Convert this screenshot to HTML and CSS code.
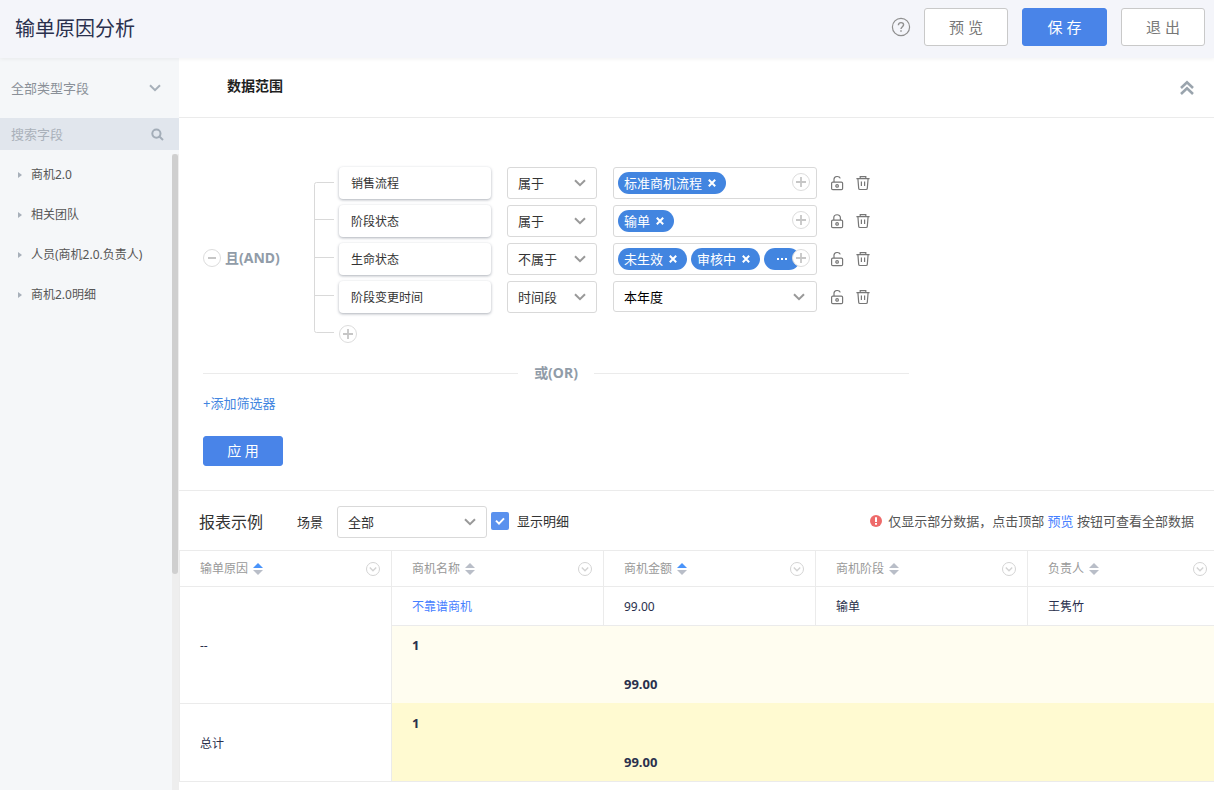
FILE: index.html
```html
<!DOCTYPE html>
<html lang="zh-CN">
<head>
<meta charset="utf-8">
<title>输单原因分析</title>
<link rel="stylesheet" href="styles.css">
</head>
<body>
<svg class="sprite" aria-hidden="true">
  <symbol id="chevron" viewBox="0 0 12 8"><path d="M1 1.2 6 6.2 11 1.2" fill="none" stroke="currentColor" stroke-width="2"/></symbol>
  <symbol id="plus" viewBox="0 0 18 18"><circle cx="9" cy="9" r="8.5" fill="#fff" stroke="#dcdcdc"/><path d="M4 9H14M9 4V14" stroke="#c6c6c6" stroke-width="1.8"/></symbol>
  <symbol id="minus" viewBox="0 0 18 18"><circle cx="9" cy="9" r="8.5" fill="#fff" stroke="#dcdcdc"/><path d="M5 9H13" stroke="#c0c0c0" stroke-width="1.8"/></symbol>
  <symbol id="unlock" viewBox="0 0 14 16"><g fill="none" stroke="#777" stroke-width="1.2"><rect x="1.6" y="7.1" width="11" height="7.6" rx="1.2"/><path d="M4 7V4.2C4 .9 9.4.6 10.3 3.4"/><circle cx="7.1" cy="10.9" r="1.3"/></g></symbol>
  <symbol id="lock" viewBox="0 0 14 16"><g fill="none" stroke="#777" stroke-width="1.2"><rect x="1.6" y="7.1" width="11" height="7.6" rx="1.2"/><path d="M3.8 7V4.8C3.8.7 10.4.7 10.4 4.8V7"/><circle cx="7.1" cy="10.9" r="1.3"/></g></symbol>
  <symbol id="trash" viewBox="0 0 14 16"><g fill="none" stroke="#777" stroke-width="1.2"><path d="M.4 3.6H13.6M4.2 3.4V1.6H9.8V3.4M1.9 3.8 2.7 13.4Q2.8 14.5 3.9 14.5H10.1Q11.2 14.5 11.3 13.4L12.1 3.8M5.4 6.6V11M8.6 6.6V11"/></g></symbol>
  <symbol id="cross" viewBox="0 0 8 8"><path d="M.8.8 7.2 7.2M7.2.8.8 7.2" stroke="#fff" stroke-width="2"/></symbol>
  <symbol id="sort" viewBox="0 0 10 12"><path d="M5 0 10 5H0Z" fill="currentColor"/><path d="M5 12 0 7H10Z" fill="#b9bec8"/></symbol>
  <symbol id="more" viewBox="0 0 14 14"><g fill="none" stroke="#d3d3d3"><circle cx="7" cy="7" r="6.5"/><path d="M3.8 5.6 7 8.8 10.2 5.6" stroke-width="1.4"/></g></symbol>
</svg>

<header class="topbar">
  <h1 class="topbar-title">输单原因分析</h1>
  <button class="icon-btn" aria-label="帮助"><svg width="20" height="20" viewBox="0 0 20 20"><g fill="none" stroke="#8f8f8f"><circle cx="10" cy="10" r="8.6" stroke-width="1.2"/><path d="M7.4 8.2C7.4 4.8 12.6 4.8 12.6 7.8 12.6 9.6 10 9.8 10 12" stroke-width="1.4"/><path d="M10 13.2V14.8" stroke-width="1.5"/></g></svg></button>
  <div class="topbar-actions">
    <button class="btn">预 览</button>
    <button class="btn btn-primary">保 存</button>
    <button class="btn">退 出</button>
  </div>
</header>

<div class="layout">
  <aside class="sidebar">
    <label class="select type-select">
      <select aria-label="字段类型"><option>全部类型字段</option></select>
      <svg class="chevron" width="12" height="8"><use href="#chevron"/></svg>
    </label>
    <label class="search">
      <input type="text" placeholder="搜索字段" aria-label="搜索字段">
      <svg width="13" height="13" viewBox="0 0 13 13"><g fill="none" stroke="#a3adb8" stroke-width="2"><circle cx="5.4" cy="5.6" r="4.1"/><path d="M8.4 8.6 12 12"/></g></svg>
    </label>
    <div class="tree-pane">
      <ul class="tree">
        <li><button class="tree-item">商机2.0</button></li>
        <li><button class="tree-item">相关团队</button></li>
        <li><button class="tree-item">人员(商机2.0.负责人)</button></li>
        <li><button class="tree-item">商机2.0明细</button></li>
      </ul>
      <div class="scroll-track"><div class="scroll-thumb"></div></div>
    </div>
  </aside>

  <main class="main">
    <div class="section-head">
      <h2 class="section-title">数据范围</h2>
      <button class="icon-btn" aria-label="收起"><svg width="14" height="16" viewBox="0 0 14 16"><path d="M1 8 7 2.4 13 8M1 14 7 8.4 13 14" fill="none" stroke="#9aa4ad" stroke-width="2.6"/></svg></button>
    </div>

    <section class="filters">
      <div class="group">
        <div class="operator">
          <button class="icon-btn" aria-label="删除条件组"><svg width="18" height="18"><use href="#minus"/></svg></button>
          <span>且(AND)</span>
        </div>
        <svg class="branch" width="20" height="151" viewBox="0 0 20 151"><path d="M20 .5H2.5Q.5.5.5 2.5V148.5Q.5 150.5 2.5 150.5H20M1 37.5H20M1 75.5H20M1 113.5H20" fill="none" stroke="#d9d9d9"/></svg>
        <div class="rules">
          <div class="rule">
            <div class="field">销售流程</div>
            <label class="select compare"><select aria-label="销售流程 运算符"><option>属于</option></select><svg class="chevron" width="12" height="8"><use href="#chevron"/></svg></label>
            <div class="value">
              <div class="tags"><span class="tag">标准商机流程<button class="tag-x" aria-label="移除"><svg width="8" height="8"><use href="#cross"/></svg></button></span></div>
              <button class="icon-btn add" aria-label="添加值"><svg width="18" height="18"><use href="#plus"/></svg></button>
            </div>
            <div class="tools"><button class="icon-btn" aria-label="未锁定"><svg width="14" height="16"><use href="#unlock"/></svg></button><button class="icon-btn" aria-label="删除"><svg width="14" height="16"><use href="#trash"/></svg></button></div>
          </div>
          <div class="rule">
            <div class="field">阶段状态</div>
            <label class="select compare"><select aria-label="阶段状态 运算符"><option>属于</option></select><svg class="chevron" width="12" height="8"><use href="#chevron"/></svg></label>
            <div class="value">
              <div class="tags"><span class="tag">输单<button class="tag-x" aria-label="移除"><svg width="8" height="8"><use href="#cross"/></svg></button></span></div>
              <button class="icon-btn add" aria-label="添加值"><svg width="18" height="18"><use href="#plus"/></svg></button>
            </div>
            <div class="tools"><button class="icon-btn" aria-label="已锁定"><svg width="14" height="16"><use href="#lock"/></svg></button><button class="icon-btn" aria-label="删除"><svg width="14" height="16"><use href="#trash"/></svg></button></div>
          </div>
          <div class="rule">
            <div class="field">生命状态</div>
            <label class="select compare"><select aria-label="生命状态 运算符"><option>不属于</option></select><svg class="chevron" width="12" height="8"><use href="#chevron"/></svg></label>
            <div class="value">
              <div class="tags">
                <span class="tag">未生效<button class="tag-x" aria-label="移除"><svg width="8" height="8"><use href="#cross"/></svg></button></span>
                <span class="tag">审核中<button class="tag-x" aria-label="移除"><svg width="8" height="8"><use href="#cross"/></svg></button></span>
                <span class="tag tag-more" aria-label="更多"><svg width="12" height="2" viewBox="0 0 12 2"><path d="M1 1H3M5 1H7M9 1H11" stroke="#fff" stroke-width="2"/></svg></span>
              </div>
              <button class="icon-btn add" aria-label="添加值"><svg width="18" height="18"><use href="#plus"/></svg></button>
            </div>
            <div class="tools"><button class="icon-btn" aria-label="未锁定"><svg width="14" height="16"><use href="#unlock"/></svg></button><button class="icon-btn" aria-label="删除"><svg width="14" height="16"><use href="#trash"/></svg></button></div>
          </div>
          <div class="rule">
            <div class="field">阶段变更时间</div>
            <label class="select compare"><select aria-label="阶段变更时间 运算符"><option>时间段</option></select><svg class="chevron" width="12" height="8"><use href="#chevron"/></svg></label>
            <label class="select period"><select aria-label="时间范围"><option>本年度</option></select><svg class="chevron" width="12" height="8"><use href="#chevron"/></svg></label>
            <div class="tools"><button class="icon-btn" aria-label="未锁定"><svg width="14" height="16"><use href="#unlock"/></svg></button><button class="icon-btn" aria-label="删除"><svg width="14" height="16"><use href="#trash"/></svg></button></div>
          </div>
          <button class="icon-btn add-rule" aria-label="添加条件"><svg width="18" height="18"><use href="#plus"/></svg></button>
        </div>
      </div>
      <div class="or-line"><span>或(OR)</span></div>
      <div class="add-filter"><a class="link" href="#">+添加筛选器</a></div>
      <button class="btn btn-primary apply">应 用</button>
    </section>

    <section class="report">
      <div class="report-head">
        <h2 class="report-title">报表示例</h2>
        <label class="scene-label" for="scene">场景</label>
        <span class="select scene"><select id="scene"><option>全部</option></select><svg class="chevron" width="12" height="8"><use href="#chevron"/></svg></span>
        <label class="check">
          <span class="check-box"><input type="checkbox" checked><svg width="10" height="8" viewBox="0 0 10 8"><path d="M1 3.6 4 6.6 9 1.4" fill="none" stroke="#fff" stroke-width="2"/></svg></span>
          显示明细
        </label>
        <p class="notice">
          <svg width="12" height="12" viewBox="0 0 12 12"><circle cx="6" cy="6" r="6" fill="#ee6a6a"/><path d="M6 2.2V6.9M6 8V9.8" stroke="#fff" stroke-width="2"/></svg>
          <span>仅显示部分数据，点击顶部 <a class="link-bright" href="#">预览</a> 按钮可查看全部数据</span>
        </p>
      </div>
      <table class="grid">
        <colgroup><col class="col"><col class="col"><col class="col"><col class="col"><col></colgroup>
        <thead>
          <tr>
            <th><div class="th"><span>输单原因</span><svg class="sort sort-asc" width="10" height="12"><use href="#sort"/></svg><svg class="more" width="14" height="14"><use href="#more"/></svg></div></th>
            <th><div class="th"><span>商机名称</span><svg class="sort" width="10" height="12"><use href="#sort"/></svg><svg class="more" width="14" height="14"><use href="#more"/></svg></div></th>
            <th><div class="th"><span>商机金额</span><svg class="sort sort-asc" width="10" height="12"><use href="#sort"/></svg><svg class="more" width="14" height="14"><use href="#more"/></svg></div></th>
            <th><div class="th"><span>商机阶段</span><svg class="sort" width="10" height="12"><use href="#sort"/></svg><svg class="more" width="14" height="14"><use href="#more"/></svg></div></th>
            <th><div class="th"><span>负责人</span><svg class="sort" width="10" height="12"><use href="#sort"/></svg><svg class="more" width="14" height="14"><use href="#more"/></svg></div></th>
          </tr>
        </thead>
        <tbody>
          <tr class="row-data"><td rowspan="2">--</td><td><a class="link-bright" href="#">不靠谱商机</a></td><td>99.00</td><td>输单</td><td>王隽竹</td></tr>
          <tr class="row-sub"><td class="count">1</td><td class="sum">99.00</td><td></td><td></td></tr>
          <tr class="row-total"><td>总计</td><td class="count">1</td><td class="sum">99.00</td><td></td><td></td></tr>
        </tbody>
      </table>
    </section>
  </main>
</div>
</body>
</html>
```
FILE: styles.css
```css
* { box-sizing: border-box; }

body {
  margin: 0;
  min-height: 100vh;
  display: flex;
  flex-direction: column;
  background: #fff;
  color: #333;
  font: 13px/20px "Noto Sans", "Noto Sans CJK SC", sans-serif;
}

h1, h2, p, ul { margin: 0; padding: 0; }
h1, h2 { font-weight: 400; }
ul { list-style: none; }
button, input, select { font: inherit; color: inherit; }
svg { display: block; flex: none; }
a { text-decoration: none; }
.sprite { position: absolute; width: 0; height: 0; }

.link { color: #4285e0; }
.link-bright { color: #4680ff; }

.icon-btn {
  display: flex;
  flex: none;
  padding: 0;
  border: 0;
  background: none;
}

.btn {
  width: 84px;
  height: 38px;
  padding: 0;
  border: 1px solid #c9c9c9;
  border-radius: 3px;
  background: #fff;
  color: #777;
  font-size: 15px;
}
.btn-primary {
  width: 85px;
  border-color: #4984e8;
  background: #4984e8;
  color: #fff;
}

/* Drop-downs: the arrow shares the grid cell with the control */
.select { display: grid; align-items: center; }
.select select {
  grid-area: 1 / 1;
  width: 100%;
  height: 32px;
  padding: 0 30px 0 10px;
  border: 1px solid #d9d9d9;
  border-radius: 3px;
  background: #fff;
  appearance: none;
}
.select .chevron {
  grid-area: 1 / 1;
  justify-self: end;
  margin-right: 11px;
  color: #999;
  pointer-events: none;
}

.topbar {
  position: relative;
  display: flex;
  align-items: center;
  height: 58px;
  padding: 0 9px 4px 15px;
  background: #f4f5fa;
  box-shadow: 0 1px 4px rgba(0, 0, 0, .06);
}
.topbar-title {
  flex: 1;
  padding-top: 4px;
  color: #2a304d;
  font-size: 20px;
  line-height: 30px;
}
.topbar-actions { display: flex; gap: 14px; margin-left: 13px; }

.layout { flex: 1; display: flex; }

.sidebar {
  flex: none;
  display: flex;
  flex-direction: column;
  width: 179px;
  background: #f5f7f9;
}
.type-select { height: 60px; color: #8a9098; }
.type-select select { border: 0; background: none; padding-left: 11px; }
.type-select .chevron { margin-right: 18px; color: #a7b0ba; }
.search {
  display: flex;
  align-items: center;
  height: 32px;
  padding: 0 15px 0 11px;
  background: #e1e6ed;
}
.search input {
  flex: 1;
  min-width: 0;
  padding: 0;
  border: 0;
  background: none;
}
.search input::placeholder { color: #aab1ba; }

.tree-pane { flex: 1; display: flex; padding-top: 4px; }
.tree { flex: 1; font-size: 12px; }
.tree-item {
  display: flex;
  align-items: center;
  gap: 9px;
  height: 40px;
  padding: 2px 0 0 18px;
  border: 0;
  background: none;
  color: #555;
  white-space: nowrap;
}
.tree-item::before {
  content: "";
  border: 3px solid transparent;
  border-left: 4px solid #a7b0ba;
  border-right: 0;
}
.scroll-track { width: 7px; padding-right: 1px; background: #eee; }
.scroll-thumb { height: 420px; border-radius: 3px; background: #cfcfcf; }

.main { flex: 1; min-width: 0; }

.section-head {
  display: flex;
  align-items: center;
  justify-content: space-between;
  height: 60px;
  padding: 0 20px 0 48px;
  border-bottom: 1px solid #ebebeb;
}
.section-title {
  padding-bottom: 4px;
  color: #1f1f1f;
  font-size: 14px;
  font-weight: 700;
}

.filters { padding: 49px 24px 24px; border-bottom: 1px solid #ebebeb; }
.group { display: flex; align-items: center; }
.operator {
  display: flex;
  align-items: center;
  gap: 4px;
  width: 111px;
  padding-top: 6px;
  color: #919ca8;
  font-size: 14px;
  font-weight: 700;
}
.branch { margin: 5px 5px 0 0; }
.rules { display: grid; gap: 6px; }
.rule { display: flex; align-items: center; gap: 16px; height: 32px; }
.field {
  width: 152px;
  padding: 7px 12px 5px;
  border-radius: 4px;
  font-size: 12px;
  box-shadow: 0 1px 3px rgba(50, 60, 80, .4);
}
.compare { width: 90px; }
.value {
  display: flex;
  align-items: center;
  width: 204px;
  height: 32px;
  padding: 0 6px 0 4px;
  border: 1px solid #d9d9d9;
  border-radius: 3px;
}
.tags { flex: 1; display: flex; gap: 4px; min-width: 0; }
.tag {
  flex: none;
  display: flex;
  align-items: center;
  gap: 6px;
  height: 22px;
  padding: 0 10px 0 6px;
  border-radius: 11px;
  background: #4285e0;
  color: #fff;
}
.tag-more { width: 36px; padding-left: 12px; }
.tag-x { display: flex; padding: 0; border: 0; background: none; }
/* The add button lies over the last tag when tags overflow */
.add { position: relative; margin-bottom: 2px; }
.period { align-self: start; width: 204px; }
.period select { height: 31px; color: #000; }
.period .chevron { margin-right: 12px; }
.tools { display: flex; gap: 12px; margin-left: -3px; }
.add-rule { margin: 6px 0 0; }

.or-line {
  display: flex;
  align-items: center;
  gap: 16px;
  max-width: 706px;
  margin-top: 20px;
  color: #919ca8;
  font-size: 14px;
  font-weight: 700;
}
.or-line::before, .or-line::after {
  content: "";
  flex: 1;
  height: 1px;
  background: #ebebeb;
}
.add-filter { margin: 10px 0 23px; }
.apply { width: 80px; height: 30px; font-size: 14px; }

.report-head {
  display: flex;
  align-items: center;
  height: 59px;
  padding: 2px 20px 0;
}
.report-title { font-size: 16px; }
.scene-label { margin: 0 14px 0 34px; }
.scene { width: 150px; margin-right: 4px; }
.check { display: flex; align-items: center; gap: 8px; padding-bottom: 2px; }
.check-box { display: grid; place-items: center; }
.check-box input {
  grid-area: 1 / 1;
  width: 18px;
  height: 18px;
  margin: 0;
  border-radius: 2px;
  background: #5a91ee;
  appearance: none;
}
.check-box svg { grid-area: 1 / 1; pointer-events: none; }
.notice {
  display: flex;
  align-items: center;
  gap: 6px;
  margin-left: auto;
  padding-bottom: 2px;
  color: #555;
}

.grid {
  width: 100%;
  border-top: 1px solid #ebebeb;
  border-left: 1px solid #ebebeb;
  border-spacing: 0;
  table-layout: fixed;
  color: #2a304d;
  font-size: 12px;
}
.col { width: 212px; }
.grid th, .grid td {
  padding: 2px 20px 0;
  border-right: 1px solid #ebebeb;
  border-bottom: 1px solid #ebebeb;
  text-align: left;
}
.grid th { height: 36px; padding: 0 11px 0 20px; color: #999; font-weight: 400; }
.grid th:last-child { padding-right: 7px; }
.grid th:last-child, .grid td:last-child { border-right: 0; }
.th { display: flex; align-items: center; gap: 5px; }
.sort { color: #b9bec8; }
.sort-asc { color: #4a94fa; }
.more { margin-left: auto; }
.row-data { height: 39px; }
.row-sub, .row-total { height: 78px; }
.grid .row-sub td, .grid .row-total td:not(:first-child) {
  padding-top: 0;
  border-right: 0;
  font-size: 13px;
  font-weight: 700;
  line-height: 38px;
}
.grid .row-sub td { border-bottom-color: #fffad1; background: #fffdf0; }
.grid .row-total td:not(:first-child) { background: #fffad1; }
.grid .count { vertical-align: top; }
.grid .sum { vertical-align: bottom; }
```
